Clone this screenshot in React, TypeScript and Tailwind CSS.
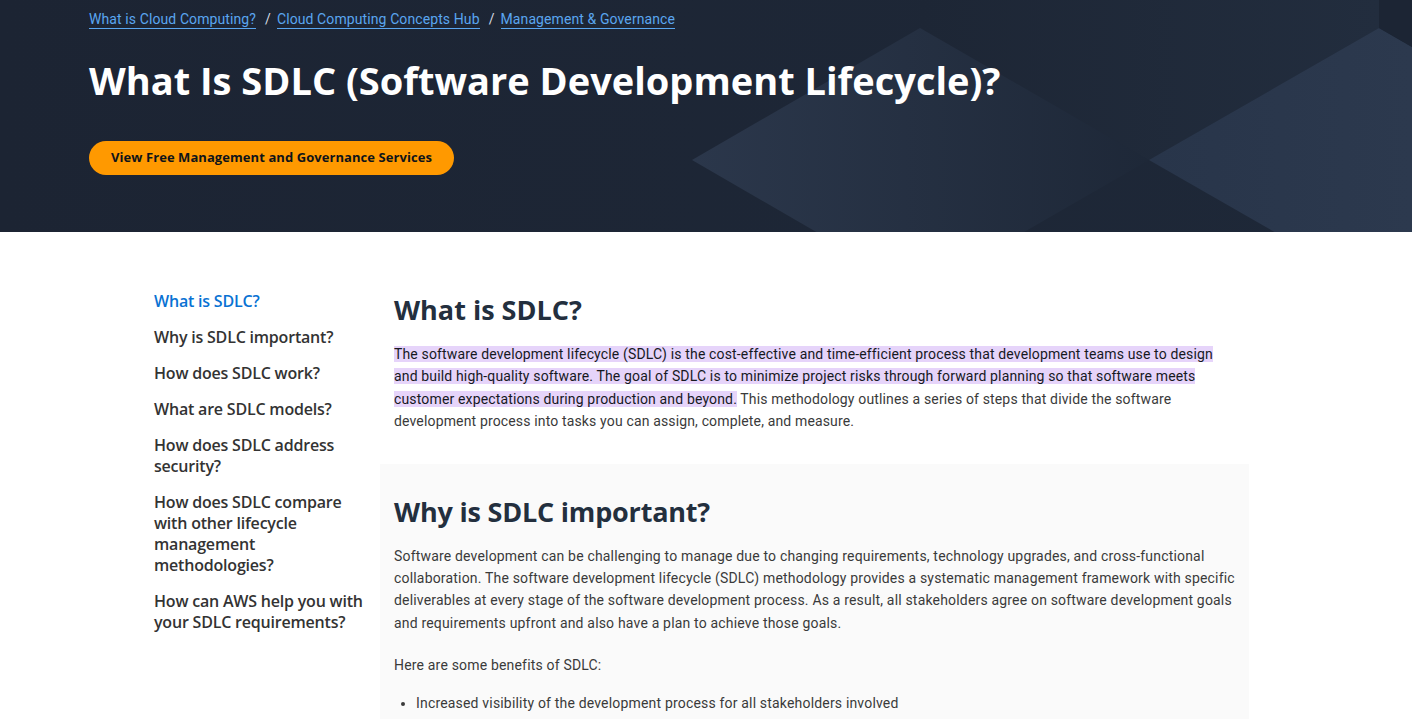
import React from "react";

const heading = { fontFamily: '"Open Sans", "Noto Sans", sans-serif' };
const body = { fontFamily: 'Roboto, "Liberation Sans", sans-serif' };

function HeroArt() {
  return (
    <svg
      className="absolute inset-0 h-full w-full"
      viewBox="0 0 1412 232"
      preserveAspectRatio="none"
      aria-hidden="true"
    >
      <defs>
        <linearGradient id="g1" x1="0" y1="0" x2="1" y2="0">
          <stop offset="0" stopColor="#2b374b" />
          <stop offset="1" stopColor="#1e2838" />
        </linearGradient>
        <linearGradient id="g2" x1="0" y1="0" x2="1" y2="0">
          <stop offset="0" stopColor="#28354a" />
          <stop offset="1" stopColor="#2f3c51" />
        </linearGradient>
        <linearGradient id="g0" x1="0" y1="0" x2="1" y2="0">
          <stop offset="0" stopColor="#1c2433" />
          <stop offset="1" stopColor="#1e2838" />
        </linearGradient>
        <linearGradient id="g3" x1="0" y1="0" x2="1" y2="0">
          <stop offset="0" stopColor="#1d2635" />
          <stop offset="1" stopColor="#222d3e" />
        </linearGradient>
      </defs>
      <rect x="0" y="0" width="1412" height="232" fill="url(#g0)" />
      <polygon points="920,0 1379,0 1379,28 1149,160 920,28" fill="url(#g3)" />
      <polygon points="920,28 1149,160 920,292 692,160" fill="url(#g1)" />
      <polygon points="1379,28 1608,160 1379,292 1149,160" fill="url(#g2)" />
      <polygon points="1379,0 1412,0 1412,47 1379,28" fill="#1c2534" />
    </svg>
  );
}

const sideItems = [
  "What is SDLC?",
  "Why is SDLC important?",
  "How does SDLC work?",
  "What are SDLC models?",
  "How does SDLC address security?",
  "How does SDLC compare with other lifecycle management methodologies?",
  "How can AWS help you with your SDLC requirements?",
];

export default function App() {
  return (
    <div className="min-h-screen bg-white" style={body}>
      <header className="relative h-[232px] overflow-hidden bg-[#1e2838]">
        <HeroArt />
        <div className="relative pl-[89px] pt-[9px]">
          <nav className="flex items-center text-[14px] leading-[20px] tracking-[0.1px] text-[#5aa6f0]">
            <a className="border-b border-[#5aa6f0] leading-[18px]">What is Cloud Computing?</a>
            <span className="ml-[9px] mr-[6px] text-[#d5dbe2]">/</span>
            <a className="border-b border-[#5aa6f0] leading-[18px]">Cloud Computing Concepts Hub</a>
            <span className="ml-[9px] mr-[6px] text-[#d5dbe2]">/</span>
            <a className="border-b border-[#5aa6f0] leading-[18px]">Management &amp; Governance</a>
          </nav>
          <h1
            className="mt-[28px] text-[38px] font-bold leading-[46px] text-white"
            style={heading}
          >
            What Is SDLC (Software Development Lifecycle)?
          </h1>
          <button
            className="mt-[38px] flex h-[34px] items-center rounded-full bg-[#ff9900] px-[22px] text-[13px] font-bold tracking-[0.07px] text-[#0f141a]"
            style={heading}
          >
            View Free Management and Governance Services
          </button>
        </div>
      </header>

      <main className="flex pl-[154px] pt-[58px]">
        <aside className="w-[226px] shrink-0 pr-[12px] pt-[1px]" style={heading}>
          <ul className="flex flex-col gap-[15px]">
            {sideItems.map((t, i) => (
              <li
                key={t}
                className={
                  i === 0
                    ? "text-[16px] font-semibold leading-[21px] tracking-[-0.2px] text-[#0972d3]"
                    : "text-[16px] font-semibold leading-[21px] tracking-[-0.2px] text-[#333333]"
                }
              >
                {t}
              </li>
            ))}
          </ul>
        </aside>

        <div className="w-[869px] shrink-0">
          <section className="px-[14px] pt-[3px]">
            <h2
              className="text-[27px] font-bold leading-[34px] text-[#232f3e]"
              style={heading}
            >
              What is SDLC?
            </h2>
            <p className="mt-[16px] text-[14px] leading-[22.4px] tracking-[0.15px] text-[#3a3a3a]">
              <span className="bg-[#e6d4fa] text-[#16191f]">
                The software development lifecycle (SDLC) is the cost-effective and time-efficient
                process that development teams use to design and build high-quality software. The
                goal of SDLC is to minimize project risks through forward planning so that software
                meets customer expectations during production and beyond.
              </span>{" "}
              This methodology outlines a series of steps that divide the software development
              process into tasks you can assign, complete, and measure.
            </p>
          </section>

          <section className="mt-[31px] bg-[#fafafa] px-[14px] pb-[20px] pt-[31px]">
            <h2
              className="text-[27px] font-bold leading-[34px] tracking-[-0.2px] text-[#232f3e]"
              style={heading}
            >
              Why is SDLC important?
            </h2>
            <p className="mt-[16px] text-[14px] leading-[22.4px] tracking-[0.18px] text-[#3a3a3a]">
              Software development can be challenging to manage due to changing requirements,
              technology upgrades, and cross-functional collaboration. The software development
              lifecycle (SDLC) methodology provides a systematic management framework with specific
              deliverables at every stage of the software development process. As a result, all
              stakeholders agree on software development goals and requirements upfront and also have
              a plan to achieve those goals.
            </p>
            <p className="mt-[20px] text-[14px] leading-[22.4px] tracking-[0.18px] text-[#3a3a3a]">
              Here are some benefits of SDLC:
            </p>
            <ul className="mt-[15px] list-disc pl-[22px] text-[14px] leading-[22.4px] tracking-[0.18px] text-[#3a3a3a]">
              <li>Increased visibility of the development process for all stakeholders involved</li>
              <li>Efficient estimation, planning, and scheduling</li>
              <li>Improved risk management and cost estimation</li>
            </ul>
          </section>
        </div>
      </main>
    </div>
  );
}
